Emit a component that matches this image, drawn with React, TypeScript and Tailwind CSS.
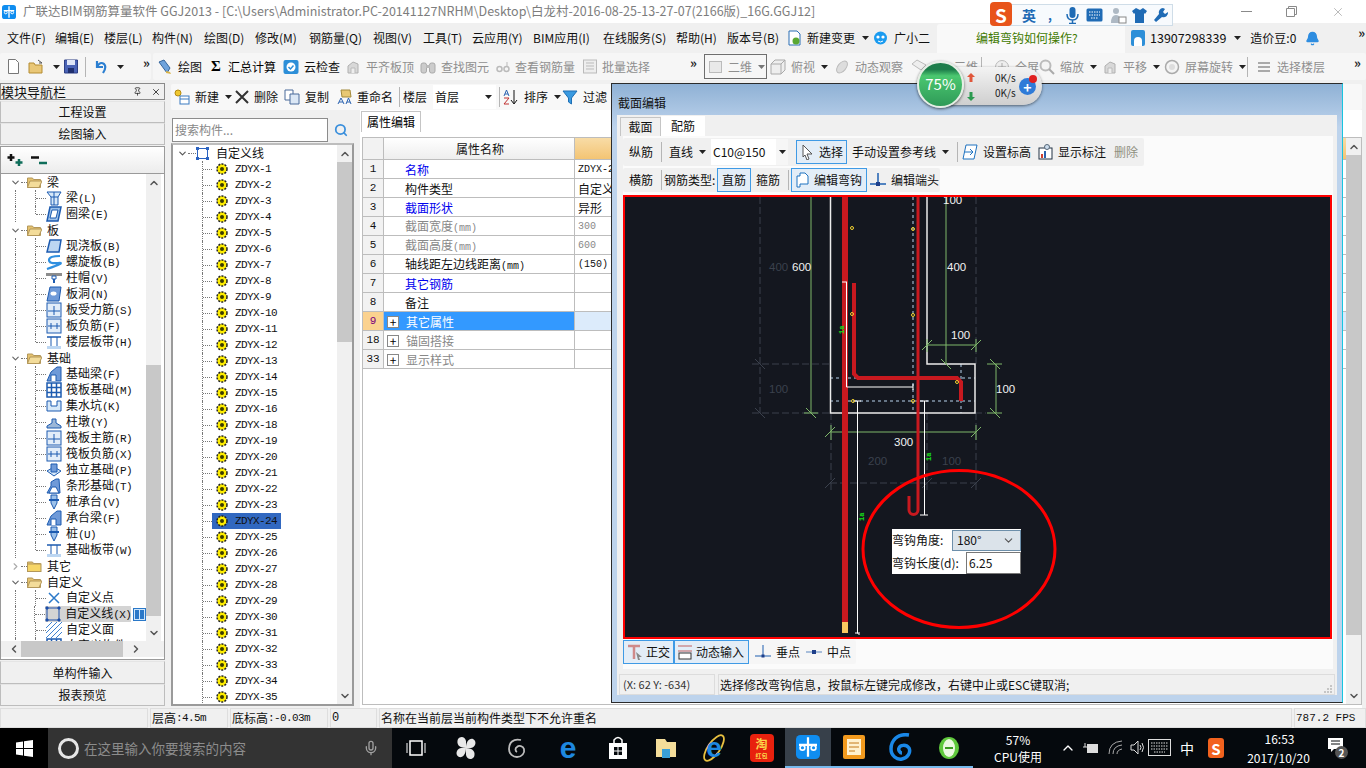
import React from 'react';
import { ChevronDown, ChevronRight, ChevronUp, ChevronLeft, Search, X, Pin, Mic, Bell } from 'lucide-react';

const CJK = "[font-family:'Noto_Sans_CJK_SC','Liberation_Sans',sans-serif]";
const MONO = "[font-family:'Liberation_Mono','Noto_Sans_CJK_SC',monospace]";

const Caret = ({ className = '' }: { className?: string }) => (
  <svg width="7" height="4" viewBox="0 0 7 4" className={className}><path d="M0 0h7L3.5 4z" fill="#222" /></svg>
);

const Dbl = ({ className = '' }: { className?: string }) => (
  <span className={`text-[13px] font-bold leading-none text-[#222] ${className}`}>»</span>
);

const Sep = ({ className = '' }: { className?: string }) => <div className={`h-[20px] w-px bg-[#b5b5b5] ${className}`} />;

const Ico = ({ children, w = 16, h = 16 }: { children: React.ReactNode; w?: number; h?: number }) => (
  <svg width={w} height={h} viewBox={`0 0 ${w} ${h}`} className="shrink-0">{children}</svg>
);

const GrayBlob = () => (
  <Ico><path d="M3 14V7l5-4 5 2v9z" fill="#d8d8d8" stroke="#b0b0b0" /><path d="M6 14V9h4v5" fill="#eee" stroke="#bbb" /></Ico>
);

const Tool = ({ icon, label, gray, caret, className = '' }: { icon?: React.ReactNode; label?: string; gray?: boolean; caret?: boolean; className?: string }) => (
  <div className={`flex h-full items-center ${className}`}>
    {icon}
    {label && <span className={`${icon ? 'ml-[5px]' : ''} whitespace-nowrap ${gray ? 'text-[#8f8f8f]' : 'text-[#111]'}`}>{label}</span>}
    {caret && <Caret className="ml-[6px]" />}
  </div>
);

const AppLogo = ({ size = 14 }: { size?: number }) => (
  <svg width={size} height={size} viewBox="0 0 16 16" className="shrink-0">
    <rect width="16" height="16" rx="3" fill="#0f8df0" />
    <path d="M8 1.500v13M2 6.500h12" stroke="#fff" strokeWidth="1.5" fill="none" />
    <circle cx="4.300" cy="8.500" r="1.600" stroke="#fff" strokeWidth="1.1" fill="none" />
    <circle cx="11.700" cy="8.500" r="1.600" stroke="#fff" strokeWidth="1.1" fill="none" />
  </svg>
);

const TitleBar = () => (
  <div className="flex h-[23px] shrink-0 items-center bg-white pl-[2px]">
    <AppLogo />
    <span className="ml-[7px] whitespace-nowrap text-[12.5px] text-[#7d7d7d]">
      广联达BIM钢筋算量软件 GGJ2013 - [C:\Users\Administrator.PC-20141127NRHM\Desktop\白龙村-2016-08-25-13-27-07(2166版)_16G.GGJ12]
    </span>
    <div className="ml-auto flex items-center pr-[21px]">
      <div className="h-px w-[11px] bg-[#8a8a8a]" />
      <svg width="11" height="11" viewBox="0 0 11 11" className="ml-[34px]"><path d="M.5 2.500h8v8h-8zM2.500 2.500v-2h8v8h-2" fill="none" stroke="#8a8a8a" /></svg>
      <X size={14} strokeWidth={1} className="ml-[34px] text-[#8a8a8a]" />
    </div>
  </div>
);

const menus: [string, string][] = [
  ['文件(F)', 'w-[48px]'], ['编辑(E)', 'w-[49px]'], ['楼层(L)', 'w-[48px]'], ['构件(N)', 'w-[52px]'], ['绘图(D)', 'w-[51px]'],
  ['修改(M)', 'w-[54px]'], ['钢筋量(Q)', 'w-[64px]'], ['视图(V)', 'w-[50px]'], ['工具(T)', 'w-[49px]'], ['云应用(Y)', 'w-[61px]'],
  ['BIM应用(I)', 'w-[70px]'], ['在线服务(S)', 'w-[73px]'], ['帮助(H)', 'w-[51px]'], ['版本号(B)', 'w-[61px]'],
];

const MenuBar = () => (
  <div className="flex h-[30px] shrink-0 items-center bg-[#f0f0f0] pl-[7px] text-[12px] text-[#111]">
    {menus.map(([m, w]) => <span key={m} className={`${w} shrink-0 whitespace-nowrap`}>{m}</span>)}
    <Ico w={13} h={16}><path d="M1 1h8l3 3v11H1z" fill="#fff" stroke="#2a6fb5" /><circle cx="8" cy="11" r="3.5" fill="#5aa832" /></Ico>
    <span className="ml-[6px] whitespace-nowrap">新建变更</span>
    <Caret className="ml-[7px]" />
    <div className="ml-[4px]"><Ico w={15} h={16}><circle cx="7.5" cy="8" r="6.5" fill="#1a9bf0" /><circle cx="5" cy="7" r="1.6" fill="#fff" /><circle cx="10" cy="7" r="1.6" fill="#fff" /><path d="M5 11q2.500 2 5 0" stroke="#fff" fill="none" /></Ico></div>
    <span className="ml-[6px] whitespace-nowrap">广小二</span>
    <div className="ml-[7px] flex h-[29px] w-[188px] shrink-0 items-center rounded-t-[3px] bg-[#f9f9f9] pl-[39px] text-[#3f7a00]">编辑弯钩如何操作?</div>
    <div className="ml-[6px] flex h-[16px] w-[14px] items-end justify-center rounded-[2px] bg-[#2d8fd8]"><div className="h-[9px] w-[8px] rounded-t-full bg-white" /></div>
    <span className="ml-[5px] text-[12.5px]">13907298339</span>
    <Caret className="ml-[8px]" />
    <span className="ml-[9px] whitespace-nowrap">造价豆:0</span>
    <Bell size={15} className="ml-[9px] fill-[#2e8de0] text-[#2e8de0]" />
    <Dbl className="ml-[38px] mb-[12px]" />
  </div>
);

const ToolBar = () => (
  <div className="flex h-[29px] shrink-0 items-start bg-[#f0f0f0] text-[12px]">
    <div className="flex h-[27px] w-[151px] shrink-0 items-center rounded-[2px] bg-[#f6f6f6] pl-[8px]">
      <Ico w={11} h={15}><path d="M.5.5h7l3 3v11H.5z" fill="#fff" stroke="#777" /></Ico>
      <div className="ml-[9px]"><Ico w={18} h={15}><path d="M10 1l4 3h-3" fill="none" stroke="#555" /><path d="M1 4h5l1 2h7v8H1z" fill="#e9c777" stroke="#b48c32" /></Ico></div>
      <Caret className="ml-[7px]" />
      <div className="ml-[4px]"><Ico w={14} h={15}><path d="M.5 1h13v13H.5z" fill="#4a63b5" stroke="#2d3f85" /><rect x="3" y="1" width="8" height="5" fill="#dfe6f7" /><rect x="4" y="9" width="6" height="5" fill="#1f2f6e" /></Ico></div>
      <Sep className="ml-[7px]" />
      <div className="ml-[8px]"><Ico w={13} h={15}><path d="M3 2v6h6M3 8q3-6 7-3 3 3-1 9" fill="none" stroke="#2b7fd1" strokeWidth="2.2" /></Ico></div>
      <Caret className="ml-[10px]" />
      <Dbl className="ml-[19px] mb-[8px]" />
    </div>
    <div className="ml-[2px] flex h-[27px] w-[550px] shrink-0 items-center rounded-[2px] bg-[#f6f6f6] pl-[4px]">
      <Tool className="w-[54px]" label="绘图" icon={<Ico w={16}><path d="M2 3l5-2 6 8-3 5z" fill="#6fa3dc" stroke="#34659c" /><path d="M9 12l4 1 1 2-5-1z" fill="#d9b44a" /></Ico>} />
      <div className="flex h-full w-[72px] items-center"><span className="w-[17px] font-['Liberation_Serif'] text-[15px] font-bold">Σ</span><span>汇总计算</span></div>
      <Tool className="w-[62px]" label="云检查" icon={<Ico><rect x=".5" y="1" width="15" height="14" rx="2" fill="#2d8fd8" /><circle cx="8" cy="8" r="4.500" fill="#fff" /><path d="M5.500 8l2 2 3-3.500" stroke="#2d8fd8" strokeWidth="1.500" fill="none" /></Ico>} />
      <Tool className="w-[75px]" gray label="平齐板顶" icon={<GrayBlob />} />
      <Tool className="w-[76px]" gray label="查找图元" icon={<Ico><rect x="1" y="4" width="5.500" height="10" rx="2" fill="#ccc" stroke="#aaa" /><rect x="9.500" y="4" width="5.500" height="10" rx="2" fill="#ccc" stroke="#aaa" /><rect x="6" y="6" width="4" height="3" fill="#bbb" /></Ico>} />
      <Tool className="w-[87px]" gray label="查看钢筋量" icon={<Ico w={14}><circle cx="3.500" cy="10" r="2.500" fill="none" stroke="#bbb" strokeWidth="1.500" /><circle cx="10.500" cy="10" r="2.500" fill="none" stroke="#bbb" strokeWidth="1.500" /><path d="M11 8V3" stroke="#bbb" /></Ico>} />
      <Tool className="w-[107px]" gray label="批量选择" icon={<Ico w={14}><rect x=".5" y="1" width="13" height="13" fill="#eee" stroke="#bbb" /><path d="M3 4h8M3 7h8M3 10h8" stroke="#bbb" /></Ico>} />
      <Dbl className="mb-[8px]" />
    </div>
    <div className="ml-[-1px] flex h-[27px] flex-1 items-center rounded-[2px] bg-[#f6f6f6] pl-[2px]">
      <div className="flex h-[25px] w-[63px] shrink-0 items-center border border-[#6e6e6e] pl-[4px] text-[#8f8f8f]">
        <div className="h-[12px] w-[13px] border border-[#bbb] bg-[#e9e9e9]" /><span className="ml-[6px]">二维</span><Caret className="ml-[6px] opacity-60" />
      </div>
      <Tool className="ml-[3px] w-[64px]" gray caret label="俯视" icon={<Ico><path d="M1 5l4-4h10v10l-4 4H1z" fill="#eee" stroke="#aaa" /><path d="M1 5h10v10M11 5l4-4" fill="none" stroke="#aaa" /></Ico>} />
      <Tool className="w-[77px]" gray label="动态观察" icon={<Ico><ellipse cx="8" cy="8" rx="4" ry="7" transform="rotate(40 8 8)" fill="#ddd" stroke="#bbb" /></Ico>} />
      <div className="flex h-full w-[70px] items-center text-[#8f8f8f]"><Ico><path d="M1 5l5-4 9 5-5 5z" fill="#eee" stroke="#bbb" /></Ico><span className="ml-[27px]">三维</span></div>
      <Sep />
      <Tool className="ml-[12px] w-[45px]" gray label="全屏" icon={<Ico><circle cx="8" cy="8" r="6.500" fill="#eee" stroke="#bbb" /><path d="M8 4v8M4 8h8" stroke="#aaa" /></Ico>} />
      <Tool className="w-[63px]" gray caret label="缩放" icon={<Ico><circle cx="6.500" cy="6.500" r="5" fill="#f4f4f4" stroke="#bbb" strokeWidth="2" /><path d="M10 10l5 5" stroke="#aaa" strokeWidth="2" /></Ico>} />
      <Tool className="w-[62px]" gray caret label="平移" icon={<GrayBlob />} />
      <Tool className="w-[83px]" gray caret label="屏幕旋转" icon={<Ico><circle cx="8" cy="8" r="6.500" fill="#f4f4f4" stroke="#aaa" strokeWidth="1.500" /><circle cx="8" cy="8" r="3" fill="#ddd" /></Ico>} />
      <Sep />
      <Tool className="ml-[8px] w-[98px]" gray label="选择楼层" icon={<Ico><path d="M2 4h12M2 8h12M2 12h12" stroke="#aaa" strokeWidth="2" /></Ico>} />
      <Dbl className="mb-[8px]" />
    </div>
  </div>
);

type Kind = 'beam' | 'ring' | 'slab' | 'spiral' | 'cap' | 'hole' | 'rebar' | 'rebar2' | 'band' | 'fbeam' | 'raft' | 'pit' | 'pier' | 'iso' | 'strip' | 'pile' | 'x' | 'line' | 'hatch';
const B = '#1d5bb0';

const NavIcon = ({ k }: { k: Kind }) => {
  const shapes: Record<Kind, React.ReactNode> = {
    beam: <><path d="M1 2h14l-3 5v8H5V7z" fill="#d6e8f9" stroke={B} /><path d="M5 7h7M8 2v13" stroke={B} /></>,
    ring: <><path d="M4 1h11l-3 14H1z" fill="#9cc1ea" stroke={B} strokeWidth="1.500" /><path d="M6 4h6l-2 8H4z" fill="#fff" stroke={B} /></>,
    slab: <path d="M4 2h11l-2 12H1z" fill="#bcd6f2" stroke={B} strokeWidth="1.500" />,
    spiral: <path d="M14 2Q3 2 3 6t9 3-11 6" fill="none" stroke="#2f8fe0" strokeWidth="2.200" />,
    cap: <><rect y="3" width="16" height="3" fill="#8c8c8c" /><path d="M6 6h4v3H6z" fill="#fff" stroke={B} /><path d="M8 9v4" stroke={B} strokeWidth="2" /></>,
    hole: <><path d="M4 1h11l-2 14H1z" fill="#6f9ad8" stroke={B} /><ellipse cx="7.500" cy="7.500" rx="3" ry="2" fill="#fff" /></>,
    rebar: <><rect x="1" y="1" width="14" height="14" fill="#e2edf9" stroke={B} /><path d="M2 9h12M8 4v9" stroke={B} /></>,
    rebar2: <><rect x="1" y="1" width="14" height="14" fill="#e2edf9" stroke={B} /><path d="M2 8h12M5 5v6M11 5v6" stroke={B} /></>,
    band: <><path d="M1 3h14M1 14h14" stroke={B} strokeWidth="1.500" /><path d="M5 3v11M11 3v11" stroke={B} /><rect x="1" y="12" width="14" height="3" fill="#bcd6f2" /></>,
    fbeam: <><path d="M1 15l4-9 6-5h4v14z" fill="#6f9ad8" stroke={B} /><path d="M5 15V9h5v6" fill="#fff" stroke={B} /></>,
    raft: <><rect x="1" y="1" width="14" height="14" fill="#fff" stroke={B} strokeWidth="1.500" /><path d="M1 5.500h14M1 10.500h14M5.500 1v14M10.500 1v14" stroke={B} strokeWidth="1.500" /></>,
    pit: <><path d="M1 3h4v5h6V3h4v10H1z" fill="#d6e8f9" stroke={B} /></>,
    pier: <><path d="M1 14h14v-2L10 9V5H6v4l-5 3z" fill="#9cb7d8" stroke={B} /></>,
    iso: <><path d="M1 9l7-4 7 4-7 5z" fill="#d6e8f9" stroke={B} /><path d="M5 2h6v8H5z" fill="#6f9ad8" stroke={B} /></>,
    strip: <><path d="M1 15l4-7V4l5-3h3l1 14z" fill="#6f9ad8" stroke={B} /><path d="M3 15l3-6h4l3 6z" fill="#fff" stroke={B} /></>,
    pile: <><path d="M5 1h6v8l-3 6-3-6z" fill="#9cc1ea" stroke={B} /><path d="M3 6h10" stroke={B} strokeWidth="2" /></>,
    x: <path d="M3 3l10 10M13 3L3 13" stroke="#2a78c8" strokeWidth="1.500" />,
    line: <><rect x="2" y="2" width="12" height="12" fill="none" stroke="#1d4fa8" /><path d="M1 1h2v2H1zM13 1h2v2h-2zM1 13h2v2H1zM13 13h2v2h-2z" fill="#1d4fa8" stroke="#1d4fa8" /></>,
    hatch: <path d="M0 6l6-6M0 11L11 0M0 16L16 0M5 16L16 5M10 16l6-6" stroke="#3f82d0" />,
  };
  return <Ico>{shapes[k]}</Ico>;
};

const Folder = ({ open = true }: { open?: boolean }) => (
  <Ico w={15} h={12}>
    <path d="M.5 2h5l1 1.500h7v8H.5z" fill="#e5c26e" stroke="#b3975a" />
    {open ? <path d="M3 5h12l-3 6.500H.5z" fill="#f3dc9a" stroke="#b3975a" /> : <rect x=".5" y="4" width="13.500" height="7.500" fill="#f6d566" stroke="#b3975a" />}
  </Ico>
);

type NavLeaf = [Kind, string, string?];
const navGroups: { name: string; open: boolean; leaves: NavLeaf[] }[] = [
  { name: '梁', open: true, leaves: [['beam', '梁', '(L)'], ['ring', '圈梁', '(E)']] },
  { name: '板', open: true, leaves: [['slab', '现浇板', '(B)'], ['spiral', '螺旋板', '(B)'], ['cap', '柱帽', '(V)'], ['hole', '板洞', '(N)'], ['rebar', '板受力筋', '(S)'], ['rebar2', '板负筋', '(F)'], ['band', '楼层板带', '(H)']] },
  { name: '基础', open: true, leaves: [['fbeam', '基础梁', '(F)'], ['raft', '筏板基础', '(M)'], ['pit', '集水坑', '(K)'], ['pier', '柱墩', '(Y)'], ['rebar', '筏板主筋', '(R)'], ['rebar2', '筏板负筋', '(X)'], ['iso', '独立基础', '(P)'], ['strip', '条形基础', '(T)'], ['pile', '桩承台', '(V)'], ['fbeam', '承台梁', '(F)'], ['pile', '桩', '(U)'], ['band', '基础板带', '(W)']] },
  { name: '其它', open: false, leaves: [] },
  { name: '自定义', open: true, leaves: [['x', '自定义点'], ['line', '自定义线', '(X)'], ['hatch', '自定义面'], ['raft', '自定义构件', '(U)']] },
];

const DOT = 'border-dotted border-[#777]';

const NavTree = () => (
  <div className="h-[467px] overflow-hidden bg-white text-[12px] text-[#111]">
    {navGroups.map((g) => (
      <React.Fragment key={g.name}>
        <div className="flex h-4 items-center pl-[9px]">
          {g.open ? <ChevronDown size={11} strokeWidth={2.500} className="text-[#666]" /> : <ChevronRight size={11} strokeWidth={2.500} className="text-[#aaa]" />}
          <div className={`w-[6px] border-t ${DOT}`} />
          <Folder open={g.open} />
          <span className="ml-[5px]">{g.name}</span>
        </div>
        {g.leaves.map(([k, name, key], i) => {
          const active = key === '(X)' && name === '自定义线';
          return (
            <div key={name + key} className="flex h-4 items-center">
              <div className="w-[14px]" />
              <div className={`h-full border-l ${DOT}`} />
              <div className="w-[19px]" />
              <div className={`border-l ${DOT} ${i === g.leaves.length - 1 ? 'h-1/2 self-start' : 'h-full'}`} />
              <div className={`w-[10px] border-t ${DOT}`} />
              <div className={`flex h-full items-center ${active ? 'bg-[#d4d4d4]' : ''}`}>
                <NavIcon k={k} />
                <span className="ml-[4px] whitespace-nowrap">{name}<span className={`${MONO} text-[11px] tracking-[-0.6px]`}>{key}</span></span>
              </div>
              {active && <div className="ml-[2px] flex h-[13px] w-[13px] gap-px border border-[#2a78c8] bg-[#cfe6fb] p-px"><div className="w-1/2 bg-[#2a78c8]" /><div className="w-1/2 bg-[#2a78c8]" /></div>}
            </div>
          );
        })}
      </React.Fragment>
    ))}
  </div>
);

const VScroll = ({ thumbTop, thumbH }: { thumbTop: string; thumbH: string }) => (
  <div className="flex h-full w-[15px] shrink-0 flex-col bg-[#f0f0f0]">
    <div className="flex h-[17px] items-center justify-center"><ChevronUp size={12} strokeWidth={3} className="text-[#555]" /></div>
    <div className={`${thumbTop} ${thumbH} bg-[#c8c8c8]`} />
    <div className="mt-auto flex h-[17px] items-center justify-center"><ChevronDown size={12} strokeWidth={3} className="text-[#555]" /></div>
  </div>
);

const NavButton = ({ label, className = '' }: { label: string; className?: string }) => (
  <div className={`flex h-[22px] items-center justify-center border border-[#bdbdbd] border-t-[#e5e5e5] bg-[#f0f0f0] text-[12px] text-[#111] ${className}`}>{label}</div>
);

const LeftNav = () => (
  <div className="flex h-full w-[165px] shrink-0 flex-col">
    <div className="mt-px flex h-[17px] items-center border border-[#8a8a8a] bg-[#f0f0f0] pr-[3px] text-[13px] leading-none text-[#111]">
      <span>模块导航栏</span>
      <Pin size={9} className="ml-auto text-[#222]" />
      <X size={10} className="ml-[9px] text-[#222]" />
    </div>
    <NavButton label="工程设置" className="mt-px" />
    <NavButton label="绘图输入" />
    <div className="mt-px flex h-[514px] flex-col border border-[#9a9a9a] bg-white">
      <div className="flex h-[27px] shrink-0 items-center gap-[7px] border-b border-[#9a9a9a] bg-gradient-to-b from-white to-[#ececec] pl-[6px]">
        <Ico w={17} h={14}><path d="M4 1v7M.5 4.500h7" stroke="#111" strokeWidth="2.500" /><path d="M12 6v7M8.500 9.500h7" stroke="#0f6e5a" strokeWidth="2.500" /></Ico>
        <Ico w={17} h={14}><path d="M0 4.500h8" stroke="#111" strokeWidth="2.500" /><path d="M8 10h8" stroke="#0f6e5a" strokeWidth="2.500" /></Ico>
      </div>
      <div className="flex h-[467px] shrink-0">
        <div className="w-[145px]"><NavTree /></div>
        <VScroll thumbTop="mt-[174px]" thumbH="h-[251px]" />
      </div>
      <div className="flex h-[16px] items-center bg-[#f0f0f0] px-[7px]">
        <ChevronLeft size={12} strokeWidth={3} className="text-[#555]" />
        <div className="ml-[1px] h-full w-[102px] bg-[#c8c8c8]" />
        <ChevronRight size={12} strokeWidth={3} className="ml-[7px] text-[#555]" />
      </div>
    </div>
    <NavButton label="单构件输入" className="mt-px h-[23px]" />
    <NavButton label="报表预览" />
  </div>
);

const zdyx = [...Array.from({ length: 16 }, (_, i) => i + 1), ...Array.from({ length: 18 }, (_, i) => i + 18)];

const Gear = () => (
  <svg width="12" height="12" viewBox="0 0 12 12" className="shrink-0">
    <circle cx="6" cy="6" r="5" fill="#ffee00" stroke="#222" strokeWidth="1.500" strokeDasharray="2 1.200" />
    <circle cx="6" cy="6" r="2" fill="#3b3b00" />
  </svg>
);

const ComponentTree = () => (
  <div className="flex h-full w-[186px] shrink-0 flex-col pr-[3px]">
    <div className="flex h-[33px] shrink-0 items-end pb-[1px]">
      <div className="ml-px flex h-[24px] w-[156px] items-center border border-[#8c8c8c] bg-white pl-[2px] text-[12px] text-[#888]">搜索构件...</div>
      <Search size={14} strokeWidth={3} className="mb-[5px] ml-[6px] text-[#3a8fdc]" />
    </div>
    <div className="flex h-[563px] border-2 border-[#9a9a9a] border-t-[#bdbdbd] bg-white text-[12px] text-[#111]">
      <div className="flex-1 overflow-hidden">
        <div className="flex h-4 items-center pl-[4px]">
          <ChevronDown size={11} strokeWidth={2.500} className="text-[#555]" />
          <div className={`w-[8px] border-t ${DOT}`} />
          <div className="h-[13px] w-[13px]"><svg width="13" height="13" viewBox="0 0 13 13"><rect x="1.500" y="1.500" width="10" height="10" fill="none" stroke="#2a62c0" /><path d="M0 0h3v3H0zM10 0h3v3h-3zM0 10h3v3H0zM10 10h3v3h-3z" fill="#2a62c0" /></svg></div>
          <span className="ml-[7px]">自定义线</span>
        </div>
        {zdyx.map((n) => (
          <div key={n} className="flex h-4 items-center">
            <div className="w-[29px]" />
            <div className={`h-full border-l ${DOT}`} />
            <div className={`w-[9px] border-t ${DOT}`} />
            <div className={`flex h-full w-[69px] shrink-0 items-center pl-[4px] ${n === 24 ? 'bg-[#3168c0]' : ''}`}>
              <Gear />
              <span className={`${MONO} ml-[7px] text-[11px] tracking-[-0.6px]`}>ZDYX-{n}</span>
            </div>
          </div>
        ))}
      </div>
      <VScroll thumbTop="mt-0" thumbH="h-[180px]" />
    </div>
  </div>
);

const propRows: { n: string; name: string; val?: string; tone?: string; valMono?: boolean; plus?: boolean }[] = [
  { n: '1', name: '名称', val: 'ZDYX-24', tone: 'text-[#0000ee]', valMono: true },
  { n: '2', name: '构件类型', val: '自定义线' },
  { n: '3', name: '截面形状', val: '异形', tone: 'text-[#0000ee]' },
  { n: '4', name: '截面宽度(mm)', val: '300', tone: 'text-[#888]' },
  { n: '5', name: '截面高度(mm)', val: '600', tone: 'text-[#888]' },
  { n: '6', name: '轴线距左边线距离(mm)', val: '(150)' },
  { n: '7', name: '其它钢筋', tone: 'text-[#0000ee]' },
  { n: '8', name: '备注' },
  { n: '9', name: '其它属性', plus: true },
  { n: '18', name: '锚固搭接', tone: 'text-[#888]', plus: true },
  { n: '33', name: '显示样式', tone: 'text-[#888]', plus: true },
];

const PropertyPanel = () => (
  <div className="ml-[3px] flex h-full flex-1 flex-col bg-white">
    <div className="flex h-[22px] shrink-0 items-end pl-px">
      <div className="flex h-[21px] w-[60px] items-center justify-center border border-b-0 border-[#c5c5c5] bg-white text-[12px]">属性编辑</div>
    </div>
    <div className="ml-[2px] mt-[5px] flex h-[568px] border border-[#bdbdbd] bg-white text-[12px] text-[#111]">
      <div className="min-w-0 flex-1">
        <div className="flex h-[22px] border-b border-[#bdbdbd]">
          <div className="w-[21px] border-r border-[#bdbdbd] bg-[#f2f2f2]" />
          <div className="flex w-[191px] items-center justify-center border-r border-[#bdbdbd] bg-gradient-to-b from-white to-[#eeeeee] pl-[2px]">属性名称</div>
          <div className="flex-1 bg-gradient-to-b from-[#f8dca6] to-[#f3c473]" />
        </div>
        {propRows.map((r) => {
          const on = r.n === '9';
          return (
            <div key={r.n} className="flex h-[19px] border-b border-[#bdbdbd]">
              <div className={`flex w-[21px] items-center justify-center border-r border-[#bdbdbd] ${on ? 'bg-[#fbd28f] text-[#7a0080]' : 'bg-[#f2f2f2]'} ${MONO} text-[11px]`}>{r.n}</div>
              <div className={`flex w-[191px] items-center border-r border-[#bdbdbd] pt-px ${on ? 'bg-[#3399ff] text-white' : r.tone ?? ''}`}>
                {r.plus ? (
                  <div className="ml-[3px] mr-[7px] flex h-[12px] w-[12px] items-center justify-center border border-[#888] bg-white text-[12px] leading-none text-black">+</div>
                ) : <div className="w-[20px] shrink-0" />}
                <div className={`${r.plus ? '' : 'ml-px'} whitespace-nowrap`}>{r.name.replace('(mm)', '')}{r.name.includes('(mm)') && <span className={`${MONO} text-[10px]`}>(mm)</span>}</div>
              </div>
              <div className={`flex flex-1 items-center pl-[3px] pt-px ${on ? 'bg-[#dcebfb]' : ''} ${r.n === '4' || r.n === '5' ? 'text-[#888]' : ''} ${r.valMono || r.n === '4' || r.n === '5' || r.n === '6' ? `${MONO} text-[10px]` : ''}`}>{r.val}</div>
            </div>
          );
        })}
      </div>
      <VScroll thumbTop="mt-0" thumbH="h-[480px]" />
    </div>
  </div>
);

const GridBar = () => (
  <div className="mt-[2px] flex h-[26px] w-full shrink-0 items-center rounded-[2px] bg-[#f8f8f8] pl-[3px] text-[12px] text-[#111]">
    <Tool className="w-[61px]" caret label="新建" icon={<Ico><circle cx="4" cy="4" r="3" fill="#f0c830" stroke="#b58a10" /><rect x="6" y="7" width="9" height="8" fill="#fff" stroke="#3a7ac0" /><path d="M6 10h9" stroke="#3a7ac0" /></Ico>} />
    <Tool className="w-[49px]" label="删除" icon={<Ico w={14}><path d="M1 2l12 12M13 2L1 14" stroke="#333" strokeWidth="2" /></Ico>} />
    <Tool className="w-[52px]" label="复制" icon={<Ico><path d="M1 1h8v10H1z" fill="#fff" stroke="#4a6a9a" /><path d="M6 5h9v10H6z" fill="#dbe7f5" stroke="#4a6a9a" /></Ico>} />
    <Tool className="w-[63px]" label="重命名" icon={<Ico><path d="M5 1h9l1 7H6z" fill="#e8c873" stroke="#a38a3c" /><path d="M2 15l3-6 3 6M3 13h4M10 15l2.500-6 2.500 6M11 13h3" fill="none" stroke="#2a62b0" /></Ico>} />
    <Sep />
    <span className="ml-[3px]">楼层</span>
    <div className="ml-[6px] flex h-[24px] w-[63px] items-center justify-between bg-white pl-[2px] pr-[4px]"><span>首层</span><Caret /></div>
    <Sep className="ml-[3px]" />
    <Tool className="ml-[3px] w-[59px]" caret label="排序" icon={<Ico><path d="M1 7l2.500-6L6 7M2 5h3" fill="none" stroke="#2a62b0" /><path d="M1 9h5l-5 6h5" fill="none" stroke="#c03030" /><path d="M11 1v13M8 11l3 4 3-4" stroke="#111" fill="none" /></Ico>} />
    <Tool label="过滤" icon={<Ico><path d="M1 2h14L9.500 9v6l-3-2V9z" fill="#3a9ae0" stroke="#1e6fb5" /></Ico>} />
  </div>
);

const Dim = ({ d, dash }: { d: string; dash?: boolean }) => (
  <path d={d} fill="none" stroke={dash ? '#3b414d' : '#7fb86a'} strokeWidth="1" strokeDasharray={dash ? '7 3' : undefined} />
);

const CadText = ({ x, y, t, dim }: { x: number; y: number; t: string; dim?: boolean }) => (
  <text x={x} y={y} fontSize="11.5" fontFamily="Liberation Sans, sans-serif" fill={dim ? '#3b414d' : '#f2f2f2'}>{t}</text>
);

const Pt = ({ x, y }: { x: number; y: number }) => <circle cx={x} cy={y} r="1.500" fill="none" stroke="#f2d230" strokeWidth="1" />;

const CadDrawing = () => (
  <svg width="705" height="440" viewBox="625 197 705 440" className="block">
    <Dim dash d="M752 364H830M752 413H830M760 197V413M976 197V364M975 413H986M831 413V492M927 413V492M976 413V492M830 483H976" />
    <path d="M755 359l10 10M755 408l10 10M825 488l10-10M922 488l10-10M971 488l10-10" stroke="#3b414d" fill="none" />
    <path d="M913 197V413M961 364V413M830 378H975M830 401H975" stroke="#b8d4ee" strokeDasharray="3 3" fill="none" />
    <path d="M830.500 197V413H975V364H927V197" stroke="#ececec" strokeWidth="1.500" fill="none" />
    <Dim d="M811 197V413M804 413H818M806 408l10 10M946 197V364M941 359l10 10M927 345H976M922 350l10-10M971 350l10-10M927 339V352M976 339V352M996 364V413M987 364H1002M987 413H1002M990 359l10 10M990 408l10 10M830 432H976M825 437l10-10M971 437l10-10M831 425V440M976 425V440" />
    <rect x="842" y="197" width="6" height="425" fill="#c8191f" />
    <rect x="842" y="622" width="6" height="11" fill="#f9c860" />
    <path d="M918 197V510a4.500 4.500 0 0 1-9 0V496" stroke="#c8191f" strokeWidth="3" fill="none" />
    <path d="M854 283V374L858 378H957L961 382V401" stroke="#c8191f" strokeWidth="4" fill="none" />
    <path d="M846.500 282V387H913M842 282h5M913 384v6M857.500 401V633M853 401h8M924.500 401V515M920 401h8M857.500 633l2 2M855 633h5M920 515h8" stroke="#fff" fill="none" />
    <Pt x={852} y={228} /><Pt x={913} y={229} /><Pt x={852} y={314} /><Pt x={913} y={315} /><Pt x={957} y={382} /><Pt x={853} y={401} /><Pt x={913} y={401} />
    <CadText x={769} y={271} t="400" dim /><CadText x={792} y={271} t="600" /><CadText x={947} y={271} t="400" /><CadText x={943} y={204} t="100" /><CadText x={951} y={339} t="100" />
    <CadText x={996} y={393} t="100" /><CadText x={894} y={446} t="300" /><CadText x={769} y={393} t="100" dim /><CadText x={868} y={465} t="200" dim /><CadText x={942} y={465} t="100" dim />
    <text transform="translate(844 334) rotate(-90)" fontSize="7" fontWeight="bold" fontFamily="Liberation Mono, monospace" fill="#18e018">1a</text>
    <text transform="translate(931 461) rotate(-90)" fontSize="7" fontWeight="bold" fontFamily="Liberation Mono, monospace" fill="#18e018">1a</text>
    <text transform="translate(864 521) rotate(-90)" fontSize="7" fontWeight="bold" fontFamily="Liberation Mono, monospace" fill="#18e018">1a</text>
    <ellipse cx="959" cy="549" rx="96" ry="78.500" fill="none" stroke="#ff0000" strokeWidth="3" />
  </svg>
);

const ActiveBtn = ({ children, className = '' }: { children: React.ReactNode; className?: string }) => (
  <div className={`flex items-center border border-[#3f9ae5] bg-[#e3edf7] ${className}`}>{children}</div>
);

const SectionDialog = () => (
  <div className="absolute left-[611px] top-[83px] z-10 flex h-[620px] w-[732px] flex-col border border-[#2b2b2b] border-r-[#17c5e0] bg-gradient-to-b from-[#8fb1d5] from-0% to-[#bdd3ec] to-[7%] text-[12px] text-[#111]">
    <div className="flex h-[31px] shrink-0 items-center pl-[6px] pt-[6px]">截面编辑</div>
    <div className="mx-[5px] flex h-[580px] flex-col bg-[#f0f0f0] pt-[1px]">
      <div className="flex h-[20px] shrink-0 items-end pl-[3px]">
        <div className="flex h-[19px] w-[41px] items-center justify-center border border-b-0 border-[#c5c5c5]">截面</div>
        <div className="flex h-[20px] w-[44px] items-center justify-center bg-white">配筋</div>
      </div>
      <div className="ml-[6px] mr-[4px] flex flex-1 flex-col bg-[#fbfbfb] pt-[2px]">
        <div className="flex h-[28px] w-[521px] shrink-0 items-center rounded-[2px] bg-[#f0f0f0] pl-[6px]">
          <span className="w-[32px]">纵筋</span><Sep />
          <Tool className="ml-[7px] w-[42px]" caret label="直线" />
          <div className="flex h-[26px] w-[65px] items-center bg-white pl-[2px]">C10@150</div>
          <div className="flex h-[26px] w-[12px] items-center justify-center bg-[#f6f6f6]"><Caret /></div>
          <ActiveBtn className="ml-[8px] h-[24px] w-[51px] pl-[4px]"><Ico w={13}><path d="M2 1l9 9H6l2 5-2 1-2-5-2 2z" fill="#fff" stroke="#555" /></Ico><span className="ml-[5px]">选择</span></ActiveBtn>
          <Tool className="ml-[5px] w-[105px]" caret label="手动设置参考线" />
          <Sep />
          <Tool className="ml-[4px] w-[76px]" label="设置标高" icon={<Ico><path d="M4 1h11l-3 14H1z" fill="#fff" stroke="#1e72c0" /><path d="M3 8h8M8 5l3 3-3 3" stroke="#1e72c0" fill="none" /></Ico>} />
          <Tool className="w-[76px]" label="显示标注" icon={<Ico w={15}><rect x="1" y="4" width="13" height="11" fill="#fff" stroke="#234" /><rect x="3" y="10" width="2" height="4" fill="#d04030" /><rect x="6" y="7" width="2" height="7" fill="#2a62b0" /><circle cx="9" cy="3" r="2.500" fill="#cde" stroke="#567" /></Ico>} />
          <span className="text-[#8f8f7f]">删除</span>
        </div>
        <div className="mt-[2px] flex h-[24px] w-[317px] shrink-0 items-center rounded-[2px] bg-[#f0f0f0] pl-[6px]">
          <span className="w-[32px]">横筋</span><Sep />
          <span className="ml-[2px] w-[53px] whitespace-nowrap">钢筋类型:</span>
          <ActiveBtn className="h-[24px] w-[34px] justify-center">直筋</ActiveBtn>
          <span className="ml-[5px] w-[32px]">箍筋</span><Sep />
          <ActiveBtn className="ml-[2px] h-[24px] w-[76px] pl-[4px]"><Ico w={13}><path d="M1 4h3V1h5l3 3v8H4v3H1z" fill="#fff" stroke="#1e72c0" /></Ico><span className="ml-[5px] whitespace-nowrap">编辑弯钩</span></ActiveBtn>
          <Tool className="ml-[3px]" label="编辑端头" icon={<Ico><path d="M8 1v11M0 12h16" stroke="#1e5fb0" strokeWidth="1.500" /><rect x="6" y="10" width="4" height="4" fill="#1e3f8a" /></Ico>} />
        </div>
        <div className="relative mt-[3px] h-[444px] w-[709px] shrink-0 border-2 border-[#ff0000] bg-[#14171f]">
          <CadDrawing />
          <div className="absolute left-[267px] top-[332px] flex h-[45px] w-[129px] flex-col bg-white">
            <div className="flex h-[22px] items-center">
              <span className="w-[60px] whitespace-nowrap">弯钩角度:</span>
              <div className="flex h-[21px] w-[69px] items-center justify-between border border-[#6d8faa] bg-[#dbe3ea] pl-[4px] pr-[5px]"><span>180°</span><ChevronDown size={13} className="text-[#555]" /></div>
            </div>
            <div className="flex h-[23px] items-center">
              <span className="w-[74px] whitespace-nowrap">弯钩长度(d):</span>
              <div className="flex h-[22px] flex-1 items-center border border-[#777] bg-white pl-[2px]">6.25</div>
            </div>
          </div>
        </div>
        <div className="flex h-[25px] items-center">
          <div className="flex h-[24px] items-center rounded-[2px] bg-[#f6f6f6] pr-[5px]">
            <ActiveBtn className="h-[24px] w-[51px] pl-[3px]"><Ico><path d="M1 2h12M7 2v13" stroke="#d08a8a" strokeWidth="2.500" /><path d="M9 8l6 5h-3l1 3-2 0z" fill="#888" /></Ico><span className="ml-[3px]">正交</span></ActiveBtn>
            <ActiveBtn className="h-[24px] w-[75px] pl-[2px]"><Ico><path d="M1 2h14M1 7h14" stroke="#c06060" /><rect x="2" y="9" width="12" height="6" fill="#fff" stroke="#333" /></Ico><span className="ml-[3px] whitespace-nowrap">动态输入</span></ActiveBtn>
            <Tool className="ml-[6px] w-[51px]" label="垂点" icon={<Ico><path d="M8 1v11M0 12h16" stroke="#1e5fb0" /><rect x="6.500" y="10.500" width="3" height="3" fill="#1e3f8a" /></Ico>} />
            <Tool label="中点" icon={<Ico><path d="M0 8h16" stroke="#5a86c0" /><rect x="6" y="6" width="4" height="4" fill="#1e3f8a" /></Ico>} />
          </div>
        </div>
      </div>
      <div className="mt-[5px] flex h-[21px] shrink-0 gap-[3px] px-[2px]">
        <div className="flex w-[96px] items-center border border-[#dcdcdc] pl-[3px] text-[11px] text-[#333]">(X: 62 Y: -634)</div>
        <div className="flex flex-1 items-center justify-between border border-[#dcdcdc] pl-px">
          <span>选择修改弯钩信息，按鼠标左键完成修改，右键中止或ESC键取消;</span>
          <svg width="10" height="10" viewBox="0 0 10 10" className="mr-px self-end"><path d="M7 1h2v2H7zM4 4h2v2H4zM7 4h2v2H7zM1 7h2v2H1zM4 7h2v2H4zM7 7h2v2H7z" fill="#c5c5c5" /></svg>
        </div>
      </div>
    </div>
  </div>
);

const StatusCell = ({ children, className = '' }: { children?: React.ReactNode; className?: string }) => (
  <div className={`flex h-full shrink-0 items-center whitespace-nowrap border border-[#dedede] px-[1px] text-[12px] text-[#111] ${className}`}>{children}</div>
);

const StatusBar = () => (
  <div className="flex h-[20px] shrink-0 gap-[2px] bg-[#f0f0f0]">
    <StatusCell className="w-[148px]" />
    <StatusCell className="w-[78px]">层高<span className={`${MONO} text-[11px] tracking-[-0.6px]`}>:4.5m</span></StatusCell>
    <StatusCell className="w-[98px]">底标高<span className={`${MONO} text-[11px] tracking-[-0.6px]`}>:-0.03m</span></StatusCell>
    <StatusCell className={`w-[47px] ${MONO} text-[11px]`}>0</StatusCell>
    <StatusCell className="w-[913px]">名称在当前层当前构件类型下不允许重名</StatusCell>
    <StatusCell className={`flex-1 ${MONO} !text-[11px]`}>787.2 FPS</StatusCell>
  </div>
);

const TaskCell = ({ children, w, on, active }: { children: React.ReactNode; w: string; on?: boolean; active?: boolean }) => (
  <div className={`flex h-full shrink-0 items-center justify-center ${w} ${active ? 'bg-[#37404a]' : ''} ${on ? 'border-b-2 border-[#76b9ed]' : ''}`}>{children}</div>
);

const WinLogo = () => (
  <svg width="17" height="17" viewBox="0 0 17 17"><path d="M0 2.500l7-1v6.500H0zM8 1.300L17 0v8H8zM0 9h7v6.500l-7-1zM8 9h9v8l-9-1.300z" fill="#fff" /></svg>
);

const TaskBar = () => (
  <div className="flex h-[40px] shrink-0 bg-[#05090d] text-white">
    <div className="flex w-[48px] shrink-0 items-center justify-center bg-black"><WinLogo /></div>
    <div className="flex w-[344px] shrink-0 items-center bg-[#333333] pl-[10px]">
      <div className="h-[21px] w-[21px] rounded-full border-[3px] border-[#e6e6e6]" />
      <span className="ml-[5px] text-[13.500px] text-[#8c8c8c]">在这里输入你要搜索的内容</span>
      <Mic size={16} className="ml-auto mr-[13px] text-[#a0a0a0]" />
    </div>
    <TaskCell w="w-[48px]"><svg width="20" height="16" viewBox="0 0 20 16"><rect x="4" y="1" width="12" height="14" fill="none" stroke="#fff" strokeWidth="1.500" /><path d="M1 3v10M19 3v10" stroke="#fff" /></svg></TaskCell>
    <TaskCell w="w-[52px]"><svg width="22" height="24" viewBox="0 0 22 24"><path d="M11 12C4 12 1 8 3 3c2-3 7-3 8 2zM11 12c7 0 10 4 8 9-2 3-7 3-8-2zM11 12c0-6 3-10 7-9 4 2 3 8-2 9zM11 12c0 6-3 10-7 9-4-2-3-8 2-9z" fill="#e8e8e8" /></svg></TaskCell>
    <TaskCell w="w-[50px]"><svg width="20" height="22" viewBox="0 0 20 22"><path d="M14 3C6 1 2 6 2 12c0 5 4 8 8 8 5 0 8-4 7-8-1-3-5-4-7-2-2 1-2 4 0 5" fill="none" stroke="#bdbdbd" strokeWidth="1.800" /></svg></TaskCell>
    <TaskCell w="w-[52px]"><span className="font-['Liberation_Sans'] text-[30px] font-bold leading-none text-[#1e88e0]">e</span></TaskCell>
    <TaskCell w="w-[48px]"><svg width="20" height="24" viewBox="0 0 20 24"><path d="M1 7h18v16H1z" fill="#fff" /><path d="M6 7V4q4-5 8 0v3" fill="none" stroke="#fff" strokeWidth="1.500" /><path d="M6 11h3.500v3.500H6zM10.500 11H14v3.500h-3.500zM6 15.500h3.500V19H6zM10.500 15.500H14V19h-3.500z" fill="#05090d" /></svg></TaskCell>
    <TaskCell w="w-[48px]"><svg width="22" height="22" viewBox="0 0 22 22"><path d="M1 2h9l2 3h9v15H1z" fill="#f4dd9a" /><path d="M7 12h8v9H7z" fill="#3aa0d8" /></svg></TaskCell>
    <TaskCell w="w-[48px]"><div className="relative flex h-[30px] w-[26px] items-center justify-center"><svg width="26" height="30" viewBox="0 0 26 30" className="absolute left-0 top-0"><ellipse cx="13" cy="15" rx="6" ry="15" transform="rotate(35 13 15)" fill="none" stroke="#e8c040" strokeWidth="1.800" /></svg><span className="relative font-['Liberation_Sans'] text-[28px] font-bold leading-none text-[#1e88e0]">e</span></div></TaskCell>
    <TaskCell w="w-[47px]"><div className="flex h-[28px] w-[24px] flex-col items-center justify-center rounded-[4px] bg-[#e8210e] font-bold text-[#fbd64a]"><span className="text-[12px] leading-[15px]">淘</span><span className="text-[6px] leading-[9px]">红包</span></div></TaskCell>
    <TaskCell w="w-[46px]" on active><AppLogo size={24} /></TaskCell>
    <TaskCell w="w-[46px]" on><svg width="24" height="26" viewBox="0 0 24 26"><rect x="1" y="1" width="22" height="24" rx="2" fill="#f29a1e" /><path d="M5 5h14v16H5z" fill="#fff1cf" /><path d="M7 9h10M7 13h10M7 17h6" stroke="#c47a1a" /></svg></TaskCell>
    <TaskCell w="w-[48px]" on><svg width="24" height="28" viewBox="0 0 24 28"><path d="M20 2C8 0 2 8 2 16c0 7 6 11 11 10 6-1 9-7 7-11-3-4-9-3-10 0-1 2 1 5 3 5" fill="none" stroke="#1a88e8" strokeWidth="3.500" /></svg></TaskCell>
    <TaskCell w="w-[48px]" on><svg width="22" height="26" viewBox="0 0 22 26"><ellipse cx="11" cy="14" rx="10" ry="11" fill="#5fc83c" /><ellipse cx="11" cy="14" rx="6" ry="9" fill="#eaf8e0" /><path d="M7 14h8" stroke="#3a9a20" strokeWidth="2" /></svg></TaskCell>
    <div className="ml-[20px] flex w-[50px] shrink-0 flex-col items-center justify-center text-[12px] leading-[17px]"><span>57%</span><span className="whitespace-nowrap">CPU使用</span></div>
    <ChevronUp size={16} className="ml-[17px] mt-[12px]" />
    <div className="ml-[7px] mt-[12px]"><svg width="16" height="15" viewBox="0 0 16 15"><rect x="4" y="4" width="11" height="9" fill="#ddd" /><path d="M0 7h4M2 3v4" stroke="#ddd" /></svg></div>
    <div className="ml-[9px] mt-[12px]"><svg width="15" height="15" viewBox="0 0 15 15"><path d="M1 14q0-12 13-13M5 14q0-8 9-9M9 14q0-4 5-5" fill="none" stroke="#aaa" /></svg></div>
    <div className="ml-[7px] mt-[12px]"><svg width="15" height="15" viewBox="0 0 15 15"><path d="M1 5h3l4-4v13l-4-4H1z" fill="none" stroke="#ddd" /><path d="M10 5q2 2.500 0 5M12 3q3 4.500 0 9" fill="none" stroke="#ddd" /></svg></div>
    <div className="ml-[3px] mt-[11px]"><svg width="23" height="17" viewBox="0 0 23 17"><rect x=".5" y=".5" width="22" height="16" fill="none" stroke="#ddd" /><path d="M3 4h17M3 7h17M3 10h17M6 13h11" stroke="#ddd" strokeDasharray="1.500 1" /></svg></div>
    <span className="ml-[9px] mt-[11px] text-[14px] leading-[18px]">中</span>
    <div className="ml-[14px] mt-[10px] flex h-[20px] w-[16px] items-center justify-center rounded-[3px] bg-[#f2621e] text-[15px] font-bold leading-none">S</div>
    <div className="ml-[21px] flex w-[67px] shrink-0 flex-col items-center justify-center text-[12px] leading-[19px]"><span className="pl-[2px]">16:53</span><span className="whitespace-nowrap">2017/10/20</span></div>
    <div className="relative ml-[16px] mt-[10px] h-[19px] w-[17px]">
      <svg width="15" height="15" viewBox="0 0 15 15"><path d="M0 0h15v11H6l-3 3v-3H0z" fill="#fff" /><path d="M3 3h9M3 6h9" stroke="#05090d" /></svg>
      <div className="absolute left-[7px] top-[8px] flex h-[13px] w-[13px] items-center justify-center rounded-full bg-[#555] text-[10px] font-bold">2</div>
    </div>
  </div>
);

const ImeBar = () => (
  <div className="absolute left-[1003px] top-[4px] z-20 flex h-[22px] w-[170px] items-center border border-[#cfdde8] bg-[#f7fafd] pl-[8px] text-[#1f6bb5]">
    <span className="absolute left-[-14px] top-[-3px] flex h-[24px] w-[22px] items-center justify-center rounded-[4px] bg-[#e8541a] text-[19px] font-bold leading-none text-white">S</span>
    <span className="ml-[10px] text-[14px] font-bold">英</span>
    <span className="ml-[12px] text-[12px] font-bold">,</span>
    <svg width="13" height="17" viewBox="0 0 13 17" className="ml-[14px] block"><rect x="3.500" y="0" width="6" height="11" rx="3" fill="#1f6bb5" /><path d="M1 7q0 6 5.500 6T12 7M6.500 13v3M3 16.500h7" fill="none" stroke="#1f6bb5" strokeWidth="1.500" /></svg>
    <div className="ml-[7px]"><svg width="17" height="14" viewBox="0 0 17 14" className="block"><rect x=".5" y=".5" width="16" height="13" rx="1.500" fill="#1f6bb5" /><path d="M3 4h11M3 7h11M5 10h7" stroke="#fff" strokeDasharray="1.500 1" /></svg></div>
    <div className="ml-[7px]"><svg width="17" height="17" viewBox="0 0 17 17" className="block"><circle cx="6" cy="4" r="3" fill="#aeb9c4" /><path d="M1 16q0-8 5-8t5 8z" fill="#aeb9c4" /><rect x="9" y="10" width="7" height="6" fill="#fff" stroke="#888" /></svg></div>
    <div className="ml-[5px]"><svg width="15" height="15" viewBox="0 0 15 15" className="block"><path d="M4 0L0 3l2 3 1-1v10h9V5l1 1 2-3-4-3-3 2z" fill="#1f6bb5" /></svg></div>
    <div className="ml-[6px]"><svg width="16" height="16" viewBox="0 0 16 16" className="block"><path d="M10 1a4.500 4.500 0 0 0-4 6L1 13l2 2 6-5a4.500 4.500 0 0 0 6-5l-3 2-2-2 2-3z" fill="#1f6bb5" /></svg></div>
  </div>
);

const NetWidget = () => (
  <div className="absolute left-[917px] top-[61px] z-20 flex h-[47px] w-[125px] items-center">
    <div className="absolute left-[30px] top-[6px] h-[38px] w-[95px] rounded-r-[19px] bg-gradient-to-b from-[#f3f3f3] to-[#cfcfcf] shadow-[0_1px_3px_rgba(0,0,0,0.5)]" />
    <div className="absolute left-0 top-0 flex h-[47px] w-[47px] items-center justify-center rounded-full border-[2px] border-[#e5eee5] bg-gradient-to-b from-[#1c7d4a] from-15% via-[#4bc870] via-30% to-[#2f9a58] text-[15px] text-white shadow-[0_1px_3px_rgba(0,0,0,0.6)]">75%</div>
    <svg width="10" height="30" viewBox="0 0 10 30" className="absolute left-[49px] top-[11px]"><path d="M5 1l4 4H6.500v5h-3V5H1z" fill="#e0563a" /><path d="M5 29l4-4H6.500v-5h-3v5H1z" fill="#2c9a50" /></svg>
    <div className="absolute left-[78px] top-[9px] flex flex-col text-[10px] leading-[15px] text-[#222]"><span>0K/s</span><span>0K/s</span></div>
    <div className="absolute left-[102px] top-[17px] flex h-[17px] w-[17px] items-center justify-center rounded-full bg-[#2f7bd8] text-[14px] font-bold leading-none text-white">+</div>
    <div className="absolute left-[112px] top-[14px] h-[8px] w-[8px] rounded-full bg-[#e02020]" />
  </div>
);

const App = () => (
  <div className={`relative flex h-[768px] w-[1366px] flex-col overflow-hidden bg-[#f0f0f0] ${CJK} text-[12px]`}>
    <TitleBar />
    <MenuBar />
    <ToolBar />
    <div className="flex h-[626px] shrink-0">
      <LeftNav />
      <div className="ml-[6px] flex h-full flex-1 flex-col pr-[4px]">
        <GridBar />
        <div className="flex min-h-0 flex-1">
          <ComponentTree />
          <PropertyPanel />
        </div>
      </div>
    </div>
    <StatusBar />
    <TaskBar />
    <SectionDialog />
    <ImeBar />
    <NetWidget />
  </div>
);

export default App;
